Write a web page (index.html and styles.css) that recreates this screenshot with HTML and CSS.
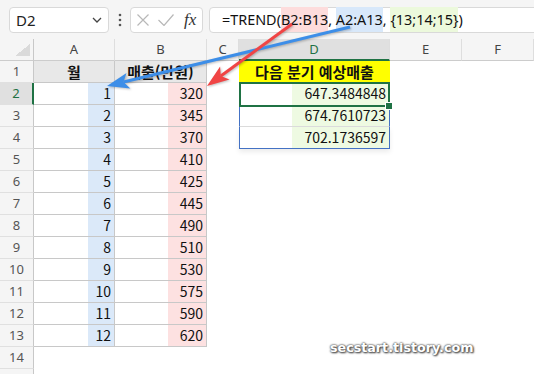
FILE: index.html
```html
<!DOCTYPE html>
<html lang="ko">
<head>
<meta charset="UTF-8">
<meta name="viewport" content="width=device-width, initial-scale=1.0">
<link rel="stylesheet" href="styles.css">
<title>TREND 함수</title>
</head>
<body>
<div class="app">
  <div class="formula-bar">
    <div class="name-box">
      <span>D2</span>
      <svg width="10" height="6" viewBox="0 0 10 6"><path d="M1 1 L5 5 L9 1" fill="none" stroke="#444" stroke-width="1.3"/></svg>
    </div>
    <div class="dots">
      <svg width="4" height="14" viewBox="0 0 4 14"><circle cx="2" cy="2" r="1.3"/><circle cx="2" cy="7" r="1.3"/><circle cx="2" cy="12" r="1.3"/></svg>
    </div>
    <div class="fx-box">
      <svg class="cancel" width="12" height="12" viewBox="0 0 12 12"><path d="M0.5 0.5 L11.5 11.5 M11.5 0.5 L0.5 11.5" stroke="#b8b8b8" stroke-width="1.2"/></svg>
      <svg class="enter" width="16" height="12" viewBox="0 0 16 12"><path d="M0.5 6 L6 11.5 L15.5 0.5" fill="none" stroke="#b8b8b8" stroke-width="1.2"/></svg>
      <span class="fx">fx</span>
    </div>
    <div class="formula">=TREND(<span class="ref ref-b">B2:B13</span>, <span class="ref ref-a">A2:A13</span>, <span class="ref ref-c">{13;14;15}</span>)</div>
  </div>

  <div class="sheet">
    <div class="ch corner"></div><div class="ch">A</div><div class="ch">B</div><div class="ch">C</div><div class="ch sel">D</div><div class="ch">E</div><div class="ch">F</div>

    <div class="rh">1</div><div class="cell t hd">월</div><div class="cell t hd">매출(만원)</div><div class="cell"></div><div class="cell d1">다음 분기 예상매출</div><div class="cell"></div><div class="cell"></div>
    <div class="rh sel">2</div><div class="cell t num av">1</div><div class="cell t num bv">320</div><div class="cell"></div><div class="cell num d d2">647.3484848</div><div class="cell"></div><div class="cell"></div>
    <div class="rh">3</div><div class="cell t num av">2</div><div class="cell t num bv">345</div><div class="cell"></div><div class="cell num d d3">674.7610723</div><div class="cell"></div><div class="cell"></div>
    <div class="rh">4</div><div class="cell t num av">3</div><div class="cell t num bv">370</div><div class="cell"></div><div class="cell num d d4">702.1736597</div><div class="cell"></div><div class="cell"></div>
    <div class="rh">5</div><div class="cell t num av">4</div><div class="cell t num bv">410</div><div class="cell"></div><div class="cell"></div><div class="cell"></div><div class="cell"></div>
    <div class="rh">6</div><div class="cell t num av">5</div><div class="cell t num bv">425</div><div class="cell"></div><div class="cell"></div><div class="cell"></div><div class="cell"></div>
    <div class="rh">7</div><div class="cell t num av">6</div><div class="cell t num bv">445</div><div class="cell"></div><div class="cell"></div><div class="cell"></div><div class="cell"></div>
    <div class="rh">8</div><div class="cell t num av">7</div><div class="cell t num bv">490</div><div class="cell"></div><div class="cell"></div><div class="cell"></div><div class="cell"></div>
    <div class="rh">9</div><div class="cell t num av">8</div><div class="cell t num bv">510</div><div class="cell"></div><div class="cell"></div><div class="cell"></div><div class="cell"></div>
    <div class="rh">10</div><div class="cell t num av">9</div><div class="cell t num bv">530</div><div class="cell"></div><div class="cell"></div><div class="cell"></div><div class="cell"></div>
    <div class="rh">11</div><div class="cell t num av">10</div><div class="cell t num bv">575</div><div class="cell"></div><div class="cell"></div><div class="cell"></div><div class="cell"></div>
    <div class="rh">12</div><div class="cell t num av">11</div><div class="cell t num bv">590</div><div class="cell"></div><div class="cell"></div><div class="cell"></div><div class="cell"></div>
    <div class="rh">13</div><div class="cell t num av">12</div><div class="cell t num bv">620</div><div class="cell"></div><div class="cell"></div><div class="cell"></div><div class="cell"></div>
    <div class="rh">14</div><div class="cell"></div><div class="cell"></div><div class="cell"></div><div class="cell"></div><div class="cell"></div><div class="cell"></div>
    <div class="rh"></div><div class="cell"></div><div class="cell"></div><div class="cell"></div><div class="cell"></div><div class="cell"></div><div class="cell"></div>
  </div>

  <svg class="arrows" width="534" height="374" viewBox="0 0 534 374">
    <g class="arrow-blue">
      <line x1="350" y1="27" x2="123.5" y2="82"/>
      <polygon points="107,86 126.5,73 123.5,82 130.3,88.6"/>
    </g>
    <g class="arrow-red">
      <line x1="292" y1="24" x2="220.8" y2="76"/>
      <polygon points="207,86 220.1,66.5 220.8,76 229.5,79.5"/>
    </g>
  </svg>

  <div class="watermark">secstart.tistory.com</div>
</div>
</body>
</html>
```

FILE: styles.css
```css
* {
  box-sizing: border-box;
}
body {
  margin: 0;
  padding: 0;
  font-family: "Noto Sans CJK KR", "Noto Sans", sans-serif;
  background-color: #ffffff;
}
.app {
  position: relative;
  width: 534px;
  height: 374px;
  overflow: hidden;
  background-color: #ffffff;
}

/* formula bar */
.formula-bar {
  display: flex;
  align-items: center;
  height: 39px;
  padding-left: 9px;
  background-color: #f5f5f5;
}
.name-box {
  display: flex;
  align-items: center;
  justify-content: space-between;
  width: 100px;
  height: 26px;
  padding: 0 6px 0 6px;
  background-color: #ffffff;
  border: 1px solid #d9d9d9;
  border-radius: 4px;
  font-family: "Noto Sans", sans-serif;
  font-size: 15px;
  color: #222222;
}
.dots {
  display: flex;
  justify-content: center;
  width: 21px;
  fill: #555555;
}
.fx-box {
  display: flex;
  align-items: center;
  width: 73px;
  height: 26px;
  padding-left: 6px;
  background-color: #ffffff;
  border: 1px solid #d9d9d9;
  border-radius: 4px;
}
.enter {
  margin-left: 9px;
}
.fx {
  margin-left: 10px;
  font-family: "Liberation Serif", serif;
  font-style: italic;
  font-size: 17px;
  color: #333333;
}
.formula {
  flex: 1;
  height: 26px;
  margin-left: 6px;
  margin-right: -12px;
  padding-left: 12px;
  line-height: 24px;
  background-color: #ffffff;
  border: 1px solid #d9d9d9;
  border-radius: 4px;
  font-family: "Noto Sans", sans-serif;
  font-size: 14.4px;
  color: #111111;
  white-space: nowrap;
}
.ref {
  padding: 3px 0;
}
.ref-b {
  background-color: #fddcdc;
}
.ref-a {
  background-color: #d8e8fa;
}
.ref-c {
  background-color: #ecf9dc;
}

/* sheet grid */
.sheet {
  display: grid;
  grid-template-columns: 34px 81px 92px 32px 151px 72px 72px;
  grid-auto-rows: 22px;
}
.ch {
  background-color: #f5f5f5;
  border-right: 1px solid #dedede;
  border-bottom: 1px solid #cccccc;
  text-align: center;
  line-height: 21px;
  font-family: "Noto Sans", sans-serif;
  font-size: 13px;
  color: #444444;
}
.ch.corner {
  background: #f5f5f5 linear-gradient(to bottom right, transparent 50%, #dadada 50%) no-repeat right 3px bottom 4px / 15px 12px;
  border-right-color: #c8c8c8;
}
.ch.sel {
  background-color: #e0e0e0;
  border-bottom: 2px solid #1f7244;
  color: #1f7244;
}
.rh {
  background-color: #f5f5f5;
  border-right: 1px solid #c8c8c8;
  border-bottom: 1px solid #e0e0e0;
  text-align: center;
  line-height: 21px;
  font-family: "Noto Sans", sans-serif;
  font-size: 13px;
  color: #555555;
}
.rh.sel {
  background-color: #e0e0e0;
  border-right: 2px solid #1f7244;
  color: #1f7244;
}
.cell {
  line-height: 21px;
  font-size: 14px;
  color: #111111;
  white-space: nowrap;
}
.t {
  border-right: 1px solid #c8c8c8;
  border-bottom: 1px solid #c8c8c8;
}
.hd {
  background-color: #e8e8e8;
  text-align: center;
  font-weight: bold;
  font-size: 15px;
}
.num {
  text-align: right;
  padding-right: 3px;
}
.av {
  background: linear-gradient(to right, transparent 54px, #dbe9f9 54px);
}
.bv {
  background: linear-gradient(to right, transparent 53px, #fde1e1 53px);
}
.d1 {
  background-color: #ffff00;
  text-align: center;
  font-weight: bold;
  font-size: 15px;
}
.d {
  border-left: 1px solid #4472c4;
  border-right: 1px solid #4472c4;
  background: linear-gradient(to right, transparent 52px, #eefae2 52px);
}
.d2 {
  position: relative;
}
.d2::after {
  content: "";
  position: absolute;
  left: -1px;
  right: -1px;
  top: -1px;
  bottom: -2px;
  border: 2px solid #1f7244;
}
.d2::before {
  content: "";
  position: absolute;
  right: -4px;
  bottom: -5px;
  width: 6px;
  height: 6px;
  background-color: #1f7244;
  border: 1px solid #ffffff;
  z-index: 1;
}
.d3 {
  border-bottom: 1px solid #dcdcdc;
}
.d4 {
  border-bottom: 1px solid #4472c4;
  box-shadow: 0 3px 5px rgba(0, 0, 0, 0.08);
}

/* annotations */
.arrows {
  position: absolute;
  left: 0;
  top: 0;
  pointer-events: none;
  filter: drop-shadow(1px 1px 1px rgba(0, 0, 0, 0.25));
}
.arrow-blue line {
  stroke: #3d8ee8;
  stroke-width: 3;
}
.arrow-blue polygon {
  fill: #3d8ee8;
}
.arrow-red line {
  stroke: #f04545;
  stroke-width: 3;
}
.arrow-red polygon {
  fill: #f04545;
}
.watermark {
  position: absolute;
  left: 330px;
  top: 340px;
  font-family: "DejaVu Sans", sans-serif;
  font-weight: bold;
  font-size: 12.7px;
  color: #ffffff;
  text-shadow: 0 0 2px #555555, 0 0 2px #555555, 1px 1px 2px #333333;
}
```
